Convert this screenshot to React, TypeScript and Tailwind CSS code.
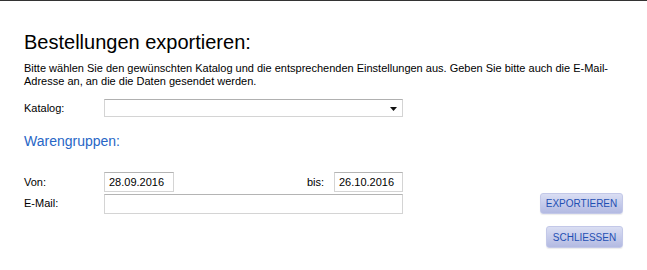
import type { FC, ReactNode } from "react";

const font = { fontFamily: '"Liberation Sans", Arial, sans-serif' };

const FieldLabel: FC<{ children: ReactNode }> = ({ children }) => (
  <label className="w-[80px] shrink-0 text-[11px] leading-[13px] text-black">
    {children}
  </label>
);

const TextBox: FC<{ value?: string; className?: string }> = ({
  value = "",
  className = ""
}) => (
  <div
    className={`h-[20px] flex items-center px-[4px] border border-[#d4d4d4] border-t-[#b4b4b4] bg-white text-[11px] text-black ${className}`}
  >
    {value}
  </div>
);

const ActionButton: FC<{ label: string; className?: string }> = ({
  label,
  className = ""
}) => (
  <button
    className={`h-[21px] rounded-[3px] bg-gradient-to-b from-[#dadef3] to-[#b3bae2] border border-[#c3c8e8] text-[10px] text-[#1f4fb3] uppercase shadow-[0_1px_1px_rgba(0,0,0,0.08)] ${className}`}
  >
    {label}
  </button>
);

export default function App() {
  return (
    <div
      className="w-[647px] h-[270px] bg-white border-t border-[#333] overflow-hidden"
      style={font}
    >
      <div className="px-6 pt-[30px]">
        <h1 className="text-[20px] leading-[23px] text-black">
          Bestellungen exportieren:
        </h1>
        <p className="mt-[8px] text-[11px] leading-[13px] text-black">
          Bitte wählen Sie den gewünschten Katalog und die entsprechenden
          Einstellungen aus. Geben Sie bitte auch die E-Mail-
          <br />
          Adresse an, an die die Daten gesendet werden.
        </p>

        <div className="mt-[11px] flex items-center">
          <FieldLabel>Katalog:</FieldLabel>
          <div className="relative w-[299px] h-[18px] border border-[#d4d4d4] border-t-[#b0b0b0] bg-white">
            <svg
              className="absolute right-[5px] top-[7px]"
              width="7"
              height="4"
              viewBox="0 0 7 4"
            >
              <polygon points="0,0 7,0 3.5,4" fill="#111" />
            </svg>
          </div>
        </div>

        <h2 className="mt-[16px] text-[14px] leading-[17px] text-[#2866c6]">
          Warengruppen:
        </h2>

        <div className="mt-[22px] flex items-center">
          <FieldLabel>Von:</FieldLabel>
          <TextBox value="28.09.2016" className="w-[70px]" />
          <div className="w-[133px]" />
          <span className="w-[27px] text-[11px] text-black">bis:</span>
          <TextBox value="26.10.2016" className="w-[69px]" />
        </div>

        <div className="mt-[1px] flex items-center">
          <FieldLabel>E-Mail:</FieldLabel>
          <TextBox className="w-[299px]" />
          <div className="flex-1" />
          <ActionButton label="Exportieren" className="w-[83px]" />
        </div>

        <div className="mt-[12px] flex justify-end">
          <ActionButton label="Schliessen" className="w-[77px] h-[22px]" />
        </div>
      </div>
    </div>
  );
}
